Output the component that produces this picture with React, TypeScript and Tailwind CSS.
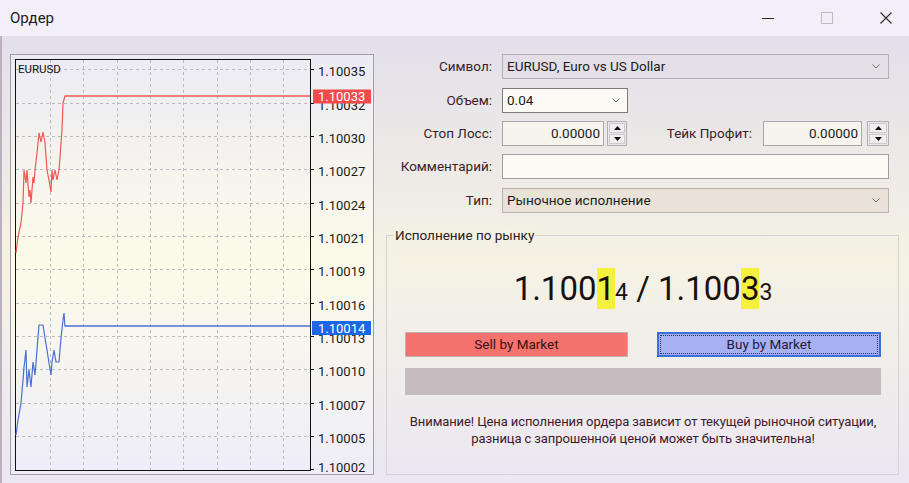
import React from "react";

const redLine =
  "16,253 18,237 21,223 23,203 24,170 26,183 27,170 29,197 30,190 31,203 33,177 34,183 35,170 37,153 39,133 41,142 43,132 45,143 47,170 49,180 51,192 52,170 53,180 55,170 57,180 59,170 60,157 62,130 63,103 65,96";
const blueLine =
  "16,435 18,420 21,403 23,380 24,367 26,350 27,387 29,370 31,387 33,362 35,375 37,350 39,325 43,325 45,338 47,350 49,363 51,375 52,362 54,350 56,362 59,362 61,338 63,320 64,313 65,326";

const prices = [
  "1.10035",
  "1.10032",
  "1.10030",
  "1.10027",
  "1.10024",
  "1.10021",
  "1.10019",
  "1.10016",
  "1.10013",
  "1.10010",
  "1.10007",
  "1.10005",
  "1.10002",
];

function Chart() {
  const rows = prices.map((p, k) => ({ p, y: Math.round(69.4 + 33.33 * k) + 0.5 }));
  const cols = [1, 2, 3, 4, 5, 6, 7, 8].map((i) => Math.round(16.7 + 33.33 * i) + 0.5);
  return (
    <svg width="362" height="419" viewBox="11 55 362 419">
      {rows.slice(0, 12).map((r) => (
        <line key={r.p} x1="16" x2="310" y1={r.y} y2={r.y} stroke="#bdbbbd" strokeDasharray="3 3" />
      ))}
      {cols.map((x) => (
        <line key={x} x1={x} x2={x} y1="60" y2="470" stroke="#bdbbbd" strokeDasharray="3 3" />
      ))}
      <rect x="15.5" y="59.5" width="295" height="411" fill="none" stroke="#111" />
      {rows.map((r) => (
        <line key={"t" + r.p} x1="310" x2="314" y1={r.y} y2={r.y} stroke="#111" />
      ))}
      {rows.map((r) => (
        <text key={"l" + r.p} x="318" y={Math.min(r.y + 6.6, 471.5)} fontSize="13" fill="#1a1a1a">
          {r.p}
        </text>
      ))}
      <polyline points={redLine} fill="none" stroke="#ee5a52" strokeWidth="1.2" />
      <line x1="64.5" x2="310" y1="96" y2="96" stroke="#ee5a52" strokeWidth="1.4" />
      <polyline points={blueLine} fill="none" stroke="#4a6fd4" strokeWidth="1.2" />
      <line x1="64.5" x2="310" y1="326" y2="326" stroke="#4a6fd4" strokeWidth="1.4" />
      <rect x="313" y="89.5" width="58" height="14" fill="#ef4b4b" />
      <text x="318" y="101.4" fontSize="13" fill="#fff">
        1.10033
      </text>
      <rect x="312" y="321" width="59" height="14" fill="#1d67e6" />
      <text x="318" y="332.6" fontSize="13" fill="#fff">
        1.10014
      </text>
      <text x="18" y="72.6" fontSize="11.5" fill="#111">
        EURUSD
      </text>
    </svg>
  );
}

function Chevron() {
  return (
    <svg width="8" height="5" viewBox="0 0 8 5" className="ml-auto shrink-0">
      <path d="M0.5 0.5 L4 4 L7.5 0.5" stroke="#6d6a6e" fill="none" />
    </svg>
  );
}

function Spinner({ w }: { w: string }) {
  return (
    <div className={`${w} h-[25px] border border-[#b3aeb4] bg-[#ebe7ea] flex flex-col p-px gap-px`}>
      <div className="flex-1 flex items-center justify-center border border-[#cdc8cd] bg-[#f1eef0]">
        <svg width="7" height="4" viewBox="0 0 7 4">
          <path d="M0 4 L3.5 0 L7 4 Z" fill="#111" />
        </svg>
      </div>
      <div className="flex-1 flex items-center justify-center border border-[#cdc8cd] bg-[#f1eef0]">
        <svg width="7" height="4" viewBox="0 0 7 4">
          <path d="M0 0 L3.5 4 L7 0 Z" fill="#111" />
        </svg>
      </div>
    </div>
  );
}

function Label({ children }: { children: React.ReactNode }) {
  return <div className="w-[106px] text-right mr-[10px] text-[#3b1d28]">{children}</div>;
}

export default function App() {
  return (
    <div className="w-[909px] h-[483px] overflow-hidden flex flex-col font-['Roboto','Liberation_Sans',sans-serif] text-[13.5px] text-[#1c1c1c]">
      <div className="h-[36px] shrink-0 bg-[#f2eff8] flex items-center pl-[10px]">
        <span className="text-[15px] text-[#1b1b1b]">Ордер</span>
        <div className="ml-auto flex items-center gap-[47px] pr-[17px]">
          <div className="w-[12px] h-px bg-[#2a2a2a]" />
          <div className="w-[12px] h-[12px] border border-[#bdbac1]" />
          <svg width="12" height="12" viewBox="0 0 12 12">
            <path d="M0.5 0.5 L11.5 11.5 M11.5 0.5 L0.5 11.5" stroke="#2a2a2a" strokeWidth="1.1" />
          </svg>
        </div>
      </div>

      <div className="flex-1 flex border-l-2 border-[#bcb0be] pl-[8px] pt-[18px] bg-linear-to-b from-[#e3dfea] via-[#f5f2e4] to-[#ebe7f2]">
        <div className="w-[364px] h-[421px] border border-[#a39dab] bg-linear-to-b from-[#ecebf4] via-[#fdfbe8] to-[#eeedf8]">
          <Chart />
        </div>

        <div className="ml-[12px] w-[513px] flex flex-col">
          <div className="flex items-center h-[25px]">
            <Label>Символ:</Label>
            <div className="flex items-center w-[387px] h-[25px] border border-[#b6afb9] bg-[#e4dee6] pl-[4px] pr-[8px]">
              EURUSD, Euro vs US Dollar
              <Chevron />
            </div>
          </div>
          <div className="flex items-center h-[25px] mt-[9px]">
            <Label>Объем:</Label>
            <div className="flex items-center w-[126px] h-[25px] border border-[#7a7a7a] bg-[#fbfaf5] pl-[4px] pr-[7px]">
              0.04
              <Chevron />
            </div>
          </div>
          <div className="flex items-center h-[25px] mt-[8px]">
            <Label>Стоп Лосс:</Label>
            <div className="flex items-center justify-end w-[102px] h-[25px] border border-[#aaa6ac] bg-[#f6f4ec] pr-[3px]">
              0.00000
            </div>
            <div className="ml-[3px]">
              <Spinner w="w-[20px]" />
            </div>
            <div className="w-[125px] text-right text-[#3b1d28]">Тейк Профит:</div>
            <div className="ml-[11px] flex items-center justify-end w-[99px] h-[25px] border border-[#aaa6ac] bg-[#f6f4ec] pr-[3px]">
              0.00000
            </div>
            <div className="ml-[5px]">
              <Spinner w="w-[22px]" />
            </div>
          </div>
          <div className="flex items-center h-[25px] mt-[8px]">
            <Label>Комментарий:</Label>
            <div className="w-[387px] h-[25px] border border-[#a09ea2] bg-[#fcfaf3]" />
          </div>
          <div className="flex items-center h-[25px] mt-[9px]">
            <Label>Тип:</Label>
            <div className="flex items-center w-[387px] h-[25px] border border-[#b9b3b4] bg-[#e9e2d8] pl-[4px] pr-[8px]">
              Рыночное исполнение
              <Chevron />
            </div>
          </div>

          <div className="relative mt-[22px] w-[513px] h-[240px] border border-[#d6d2da] pl-[18px] pt-[32px]">
            <div className="absolute left-[7px] -top-[9px] px-px leading-[17px] bg-[#f4f1e4] text-[#2a2020]">
              Исполнение по рынку
            </div>
            <div className="w-[476px] h-[41px] flex justify-center items-baseline text-[33px] leading-[41px] text-[#18120e] whitespace-pre">
              <span>1.100</span>
              <span className="bg-[#f4f03c]">1</span>
              <span className="text-[23px]">4</span>
              <span> / 1.100</span>
              <span className="bg-[#f4f03c]">3</span>
              <span className="text-[23px]">3</span>
            </div>
            <div className="flex gap-[29px] mt-[23px]">
              <div className="w-[223px] h-[25px] flex items-center justify-center border border-[#c4aeb0] bg-[#f4736e] text-[#3a1010]">
                Sell by Market
              </div>
              <div className="w-[224px] h-[25px] flex items-center justify-center border-2 border-[#3872d8] bg-[#a7b0f3] text-[#1e1a40] outline-1 outline-dotted outline-[#26306a] outline-offset-[-4px]">
                Buy by Market
              </div>
            </div>
            <div className="w-[476px] h-[27px] mt-[11px] bg-[#c4bcbf]" />
            <div className="w-[476px] mt-[18px] leading-[17px] text-center text-[13px] tracking-[-0.1px] whitespace-nowrap text-[#3e1a2a]">
              Внимание! Цена исполнения ордера зависит от текущей рыночной ситуации,
              <br />
              разница с запрошенной ценой может быть значительна!
            </div>
          </div>
        </div>
      </div>
    </div>
  );
}
